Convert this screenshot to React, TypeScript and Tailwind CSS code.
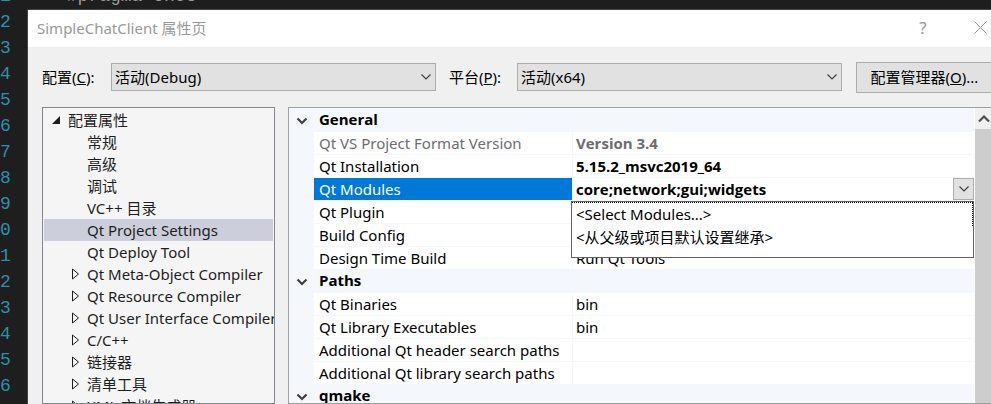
import { useState } from "react";
import clsx from "clsx";

const lineNumbers = ["1", "2", "3", "4", "5", "6", "7", "8", "9", "0", "1", "2", "3", "4", "5", "6"];

type TreeEntry = { label: string; expandable?: boolean };

const treeEntries: TreeEntry[] = [
  { label: "常规" },
  { label: "高级" },
  { label: "调试" },
  { label: "VC++ 目录" },
  { label: "Qt Project Settings" },
  { label: "Qt Deploy Tool" },
  { label: "Qt Meta-Object Compiler", expandable: true },
  { label: "Qt Resource Compiler", expandable: true },
  { label: "Qt User Interface Compiler", expandable: true },
  { label: "C/C++", expandable: true },
  { label: "链接器", expandable: true },
  { label: "清单工具", expandable: true },
  { label: "XML 文档生成器", expandable: true },
];

type Property = { name: string; value: string; bold?: boolean; disabled?: boolean; options?: string[] };

const categories: { title: string; properties: Property[] }[] = [
  {
    title: "General",
    properties: [
      { name: "Qt VS Project Format Version", value: "Version 3.4", bold: true, disabled: true },
      { name: "Qt Installation", value: "5.15.2_msvc2019_64", bold: true },
      {
        name: "Qt Modules",
        value: "core;network;gui;widgets",
        bold: true,
        options: ["<Select Modules...>", "<从父级或项目默认设置继承>"],
      },
      { name: "Qt Plugin", value: "" },
      { name: "Build Config", value: "" },
      { name: "Design Time Build", value: "Run Qt Tools" },
    ],
  },
  {
    title: "Paths",
    properties: [
      { name: "Qt Binaries", value: "bin" },
      { name: "Qt Library Executables", value: "bin" },
      { name: "Additional Qt header search paths", value: "" },
      { name: "Additional Qt library search paths", value: "" },
    ],
  },
  { title: "qmake", properties: [] },
];

function Chevron({ className, up, heavy }: { className?: string; up?: boolean; heavy?: boolean }) {
  return (
    <svg viewBox="0 0 12 8" width="12" height="8" fill="none" stroke="currentColor" strokeWidth={heavy ? 2.2 : 1.2} className={className} aria-hidden="true">
      <path d={up ? "M1 6.5 6 1.5 11 6.5" : "M1.5 1.5 6 6 10.5 1.5"} />
    </svg>
  );
}

function Combo({ id, value }: { id: string; value: string }) {
  return (
    <div className="relative w-[325px]">
      <select id={id} defaultValue={value} className="h-7 w-full appearance-none border border-[#adadad] bg-[#e1e1e1] pl-[3px] pr-6 text-black">
        <option>{value}</option>
      </select>
      <Chevron className="pointer-events-none absolute right-1 top-[10px] text-[#404040]" />
    </div>
  );
}

function PropertyTree() {
  const [selected, setSelected] = useState("Qt Project Settings");
  return (
    <nav className="w-[233px] shrink-0 overflow-hidden border border-[#828790] bg-[#f5f5f5] p-px text-[#1e1e1e]">
      <button type="button" className="flex h-[22px] w-full items-center gap-2 pl-2">
        <svg width="8" height="8" viewBox="0 0 8 8" aria-hidden="true">
          <path d="M8 0V8H0Z" fill="#1e1e1e" />
        </svg>
        配置属性
      </button>
      <ul>
        {treeEntries.map((entry) => (
          <li key={entry.label}>
            <button
              type="button"
              onClick={() => setSelected(entry.label)}
              className={clsx("flex h-[22px] w-full items-center whitespace-nowrap pl-7", entry.label === selected && "bg-[#cccedb]")}
            >
              <span className="w-[15px] shrink-0">
                {entry.expandable && (
                  <svg width="8" height="12" viewBox="0 0 8 12" fill="none" stroke="#1e1e1e" aria-hidden="true">
                    <path d="M.5 1 6.5 6 .5 11Z" />
                  </svg>
                )}
              </span>
              {entry.label}
            </button>
          </li>
        ))}
      </ul>
    </nav>
  );
}

function PropertyRow({ property }: { property: Property }) {
  const { name, value, bold, disabled, options } = property;
  return (
    <tr className={disabled ? "text-[#6d6d6d]" : "text-black"}>
      <td className="bg-[#f4f7fc]" />
      <th
        scope="row"
        className={clsx(
          "h-[23px] overflow-hidden whitespace-nowrap border-b border-r border-[#f4f7fc] p-0 pl-[5px] text-left font-normal",
          options && "bg-[#0078d7] bg-clip-padding text-white",
        )}
      >
        {name}
      </th>
      <td className="relative h-[23px] border-b border-[#f4f7fc] p-0 pl-[3px]">
        {options ? (
          <>
            <div className="flex h-[22px]">
              <input aria-label={name} defaultValue={value} className="min-w-0 flex-1 bg-transparent font-['Open_Sans',sans-serif] font-bold outline-none" />
              <button type="button" aria-label="Open list" className="flex w-[21px] items-center justify-center border border-[#adadad] bg-[#e1e1e1] text-[#404040]">
                <Chevron />
              </button>
            </div>
            <ul role="listbox" className="absolute -left-0.5 right-0 top-[23px] z-10 h-[57px] border border-[#646464] bg-white">
              {options.map((option, index) => (
                <li
                  key={option}
                  role="option"
                  aria-selected={index === 0}
                  className={clsx("flex h-6 items-center pb-0.5 pl-1", index === 0 && "border-r border-t border-dotted border-black")}
                >
                  {option}
                </li>
              ))}
            </ul>
          </>
        ) : (
          <span className={bold ? "font-['Open_Sans',sans-serif] font-bold" : ""}>{value}</span>
        )}
      </td>
    </tr>
  );
}

function PropertyGrid() {
  return (
    <section className="flex min-w-0 flex-1 overflow-hidden border border-[#a0a0a0] bg-white">
      <div className="mr-px min-w-0 flex-1">
        <table className="w-full table-fixed border-separate border-spacing-0 border-t border-[#f4f7fc]">
          <colgroup>
            <col className="w-[25px]" />
            <col className="w-[259px]" />
            <col />
          </colgroup>
          {categories.map((category) => (
            <tbody key={category.title}>
              <tr className="bg-[#f4f7fc] text-black">
                <td className="h-[23px] p-0">
                  <Chevron heavy className="mx-auto text-[#404040]" />
                </td>
                <th scope="rowgroup" colSpan={2} className="p-0 pb-0.5 pl-[5px] text-left font-['Open_Sans',sans-serif] font-bold leading-[21px]">
                  {category.title}
                </th>
              </tr>
              {category.properties.map((property) => (
                <PropertyRow key={property.name} property={property} />
              ))}
            </tbody>
          ))}
        </table>
      </div>
      <div className="w-[17px] shrink-0 bg-[#cdcdcd]">
        <button type="button" aria-label="Scroll up" className="flex h-[21px] w-full items-center justify-center bg-[#f0f0f0] text-[#505050]">
          <Chevron up heavy />
        </button>
      </div>
    </section>
  );
}

export default function App() {
  return (
    <div className="relative h-screen overflow-hidden bg-[#1e1e1e]">
      <div className="-mt-[17px] flex gap-14 font-['Liberation_Mono',monospace] text-[18px] leading-[26px]">
        <ol className="text-[#2b91af]">
          {lineNumbers.map((number, index) => (
            <li key={index}>{number}</li>
          ))}
        </ol>
        <code className="font-['Liberation_Mono',monospace] text-[#9b9b9b]">#pragma once</code>
      </div>

      <div
        role="dialog"
        aria-labelledby="dialog-title"
        className="absolute -right-3 bottom-0 left-[27px] top-[9px] flex flex-col border-l border-t border-[#434343] bg-[#f0f0f0] font-['Noto_Sans','Noto_Sans_CJK_SC',sans-serif] text-[15px] leading-[22px] text-black"
      >
        <header className="flex h-[37px] shrink-0 items-center bg-white pb-0.5 pl-[9px] text-[#999999]">
          <h1 id="dialog-title" className="flex-1">
            SimpleChatClient 属性页
          </h1>
          <button type="button" aria-label="Help" className="w-[68px] text-[17px]">
            ?
          </button>
          <button type="button" aria-label="Close" className="flex w-[46px] justify-center">
            <svg width="13" height="13" viewBox="0 0 13 13" fill="none" stroke="currentColor" aria-hidden="true">
              <path d="M.5.5l12 12M12.5.5l-12 12" />
            </svg>
          </button>
        </header>

        <div className="flex h-[60px] shrink-0 items-center pl-[14px] pr-[10px]">
          <label htmlFor="configuration" className="w-[69px]">
            配置(<u>C</u>):
          </label>
          <Combo id="configuration" value="活动(Debug)" />
          <label htmlFor="platform" className="ml-[13px] w-[68px]">
            平台(<u>P</u>):
          </label>
          <Combo id="platform" value="活动(x64)" />
          <button type="button" className="ml-[14px] h-[31px] flex-1 whitespace-nowrap border border-[#adadad] bg-[#e1e1e1]">
            配置管理器(<u>O</u>)...
          </button>
        </div>

        <div className="flex min-h-0 flex-1 gap-[13px] pl-[14px] pr-[10px]">
          <PropertyTree />
          <PropertyGrid />
        </div>
      </div>
    </div>
  );
}
